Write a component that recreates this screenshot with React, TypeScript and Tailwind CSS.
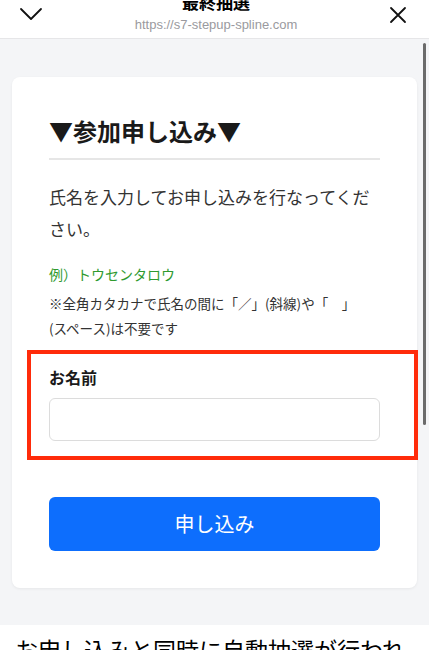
import React from "react";

const jp = { fontFamily: '"Noto Sans CJK JP", "Noto Sans", sans-serif' };

export default function App() {
  return (
    <div className="relative flex h-[650px] w-[429px] flex-col overflow-hidden bg-[#f4f5f7] text-[#222]" style={jp}>
      {/* Browser sheet header */}
      <div className="flex h-[39px] shrink-0 items-start justify-between border-b border-[#e6e6e8] bg-white px-[19px]">
        <svg className="mt-[7px] h-[14px] w-[24px]" viewBox="0 0 24 14" fill="none" stroke="#111" strokeWidth="1.8" strokeLinecap="round" strokeLinejoin="round">
          <path d="M2 2l10 10L22 2" />
        </svg>
        <div className="-mt-[9px] flex flex-col items-center">
          <span className="text-[17px] font-semibold leading-[22px] text-black">最終抽選</span>
          <span className="mt-[3px] text-[13px] leading-[18px] text-[#9a9a9e]" style={{ fontFamily: '"Liberation Sans", "Noto Sans", sans-serif' }}>
            https://s7-stepup-spline.com
          </span>
        </div>
        <svg className="mr-[3px] mt-[6px] h-[18px] w-[18px]" viewBox="0 0 18 18" fill="none" stroke="#111" strokeWidth="1.8" strokeLinecap="round">
          <path d="M2 2l14 14M16 2L2 16" />
        </svg>
      </div>

      {/* scrollbar */}
      <div className="absolute right-[3px] top-[43px] h-[382px] w-[3px] rounded-full bg-[#6b6b6b]" />

      <div className="px-3 pt-[38px]">
        <div className="flex flex-col rounded-lg bg-white px-[37px] pb-[37px] pt-[34px] shadow-[0_1px_3px_rgba(0,0,0,0.06)]">
          <h1 className="border-b-2 border-[#e6e6e6] pb-[7px] text-[24px] font-bold leading-[40px] text-[#1a1a1a]">▼参加申し込み▼</h1>

          <p className="mt-[21px] text-[17px] leading-[32px] text-[#333]">氏名を入力してお申し込みを行なってください。</p>

          <p className="mt-[16px] text-[14px] leading-[26px] text-[#2f9a2f]">例）トウセンタロウ</p>
          <p className="mt-[4px] text-[13.5px] leading-[25px] text-[#333]">
            ※全角カタカナで氏名の間に「／」(斜線)や「　」
            <br />
            (スペース)は不要です
          </p>

          <div className="relative mt-[25px] flex flex-col gap-[10px]">
            <label className="text-[16px] font-bold leading-[22px] text-[#1a1a1a]">お名前</label>
            <input className="h-[43px] w-full rounded-md border border-[#dcdcdc] bg-white px-3 outline-none" />
            <div className="pointer-events-none absolute left-[-22px] right-[-38px] top-[-16px] h-[110px] border-[4px] border-[#ff2b0a]" />
          </div>

          <button className="mt-[56px] h-[54px] w-full rounded-md bg-[#0d6efd] text-[20px] leading-[54px] text-white">申し込み</button>
        </div>
      </div>

      <div className="mt-[37px] bg-white px-[15px] pt-[8px]">
        <p className="whitespace-nowrap text-[23px] leading-[32px] text-black">お申し込みと同時に自動抽選が行われ</p>
      </div>
    </div>
  );
}
